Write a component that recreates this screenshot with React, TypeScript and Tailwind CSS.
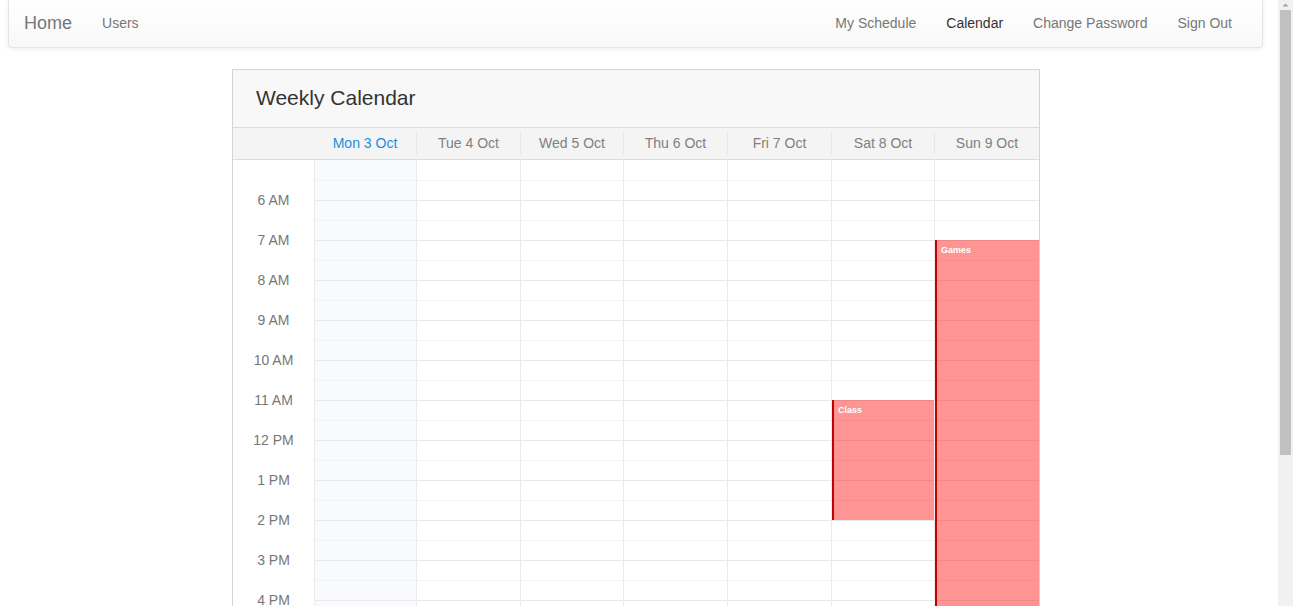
import React from 'react';

const days = ['Mon 3 Oct', 'Tue 4 Oct', 'Wed 5 Oct', 'Thu 6 Oct', 'Fri 7 Oct', 'Sat 8 Oct', 'Sun 9 Oct'];

// hours shown in the grid, first slot (5 AM) has no label
const hours = [5, 6, 7, 8, 9, 10, 11, 12, 13, 14, 15, 16, 17, 18, 19, 20];

const fmt = (h: number) => {
  if (h === 12) return '12 PM';
  return h < 12 ? `${h} AM` : `${h - 12} PM`;
};

const START = 5;
const SLOT = 40;

interface CalEvent {
  day: number;
  title: string;
  from: number;
  to: number;
}

const events: CalEvent[] = [
  { day: 5, title: 'Class', from: 11, to: 14 },
  { day: 6, title: 'Games', from: 7, to: 21 },
];

const cols = 'grid grid-cols-[81px_102px_104px_103px_104px_104px_103px_1fr]';

const Navbar: React.FC = () => (
  <nav className="ml-[8px] w-[1255px] h-[48px] rounded-b-[4px] border border-t-0 border-[#e4e4e4] bg-gradient-to-b from-white to-[#f8f8f8] shadow-[0_1px_5px_rgba(0,0,0,0.075)] flex items-center justify-between px-[15px] text-[14px]">
    <div className="flex items-center">
      <a className="text-[18px] text-[#777] pr-[15px] cursor-pointer">Home</a>
      <a className="text-[#777] px-[15px] cursor-pointer">Users</a>
    </div>
    <div className="flex items-center">
      <a className="text-[#777] px-[15px] cursor-pointer">My Schedule</a>
      <a className="text-[#333] px-[15px] cursor-pointer">Calendar</a>
      <a className="text-[#777] px-[15px] cursor-pointer">Change Password</a>
      <a className="text-[#777] px-[15px] cursor-pointer">Sign Out</a>
    </div>
  </nav>
);

const DayColumn: React.FC<{ index: number }> = ({ index }) => {
  const evs = events.filter((e) => e.day === index);
  return (
    <div className={`relative border-l border-[#ebebeb] ${index === 0 ? 'bg-[#f8fafe]' : 'bg-white'}`}>
      <div className="h-px" />
      {hours.map((h) => (
        <div key={h}>
          <div className="h-[20px] border-b border-[#f3f3f3]" />
          <div className="h-[20px] border-b border-[#e8e8e8]" />
        </div>
      ))}
      {evs.map((e) => (
        <div
          key={e.title}
          className="absolute left-0 right-0 border-l-2 border-[#c40000] bg-[rgba(255,0,0,0.42)] px-[4px] pt-[6px] text-[9px] font-bold leading-none text-white"
          style={{ top: (e.from - START) * SLOT, height: (e.to - e.from) * SLOT }}
        >
          {e.title}
        </div>
      ))}
    </div>
  );
};

// window scrollbar as it appears in the screenshot
const Scrollbar: React.FC = () => (
  <div className="fixed top-0 right-0 h-screen w-[15px] bg-[#f1f1f1] flex flex-col items-center">
    <svg width="15" height="10" viewBox="0 0 15 10" className="shrink-0">
      <path d="M4.5 6.5 L7.5 3.5 L10.5 6.5 Z" fill="#a3a3a3" />
    </svg>
    <div className="w-[11px] h-[445px] bg-[#c1c1c1]" />
  </div>
);

export default function App() {
  return (
    <div className="min-h-screen bg-white pb-[20px] font-['Liberation_Sans',Arial,sans-serif]">
      <Navbar />

      <div className="ml-[232px] mt-[21px] w-[808px] border border-[#d4d4d4]">
        {/* Panel heading */}
        <div className="h-[58px] bg-[#f8f8f8] border-b border-[#dcdcdc] flex items-center pl-[23px] pb-[2px]">
          <h3 className="text-[21px] text-[#333]">Weekly Calendar</h3>
        </div>

        {/* Day headers */}
        <div className={`${cols} bg-[#f4f4f4] border-b border-[#dcdcdc] py-[5px]`}>
          <div />
          {days.map((d, i) => (
            <div
              key={d}
              className={`h-[21px] flex items-center justify-center text-[14px] ${i === 0 ? 'text-[#1a8fe0]' : 'text-[#808080] border-l border-[#e6e6e6]'}`}
            >
              {d}
            </div>
          ))}
        </div>

        {/* Grid body */}
        <div className={cols}>
          <div className="flex flex-col">
            <div className="h-[20px]" />
            {hours.slice(1).map((h) => (
              <div key={h} className="h-[40px] flex items-center justify-center text-[14px] text-[#777]">
                {fmt(h)}
              </div>
            ))}
          </div>
          {days.map((d, i) => (
            <DayColumn key={d} index={i} />
          ))}
        </div>
      </div>

      <Scrollbar />
    </div>
  );
}
